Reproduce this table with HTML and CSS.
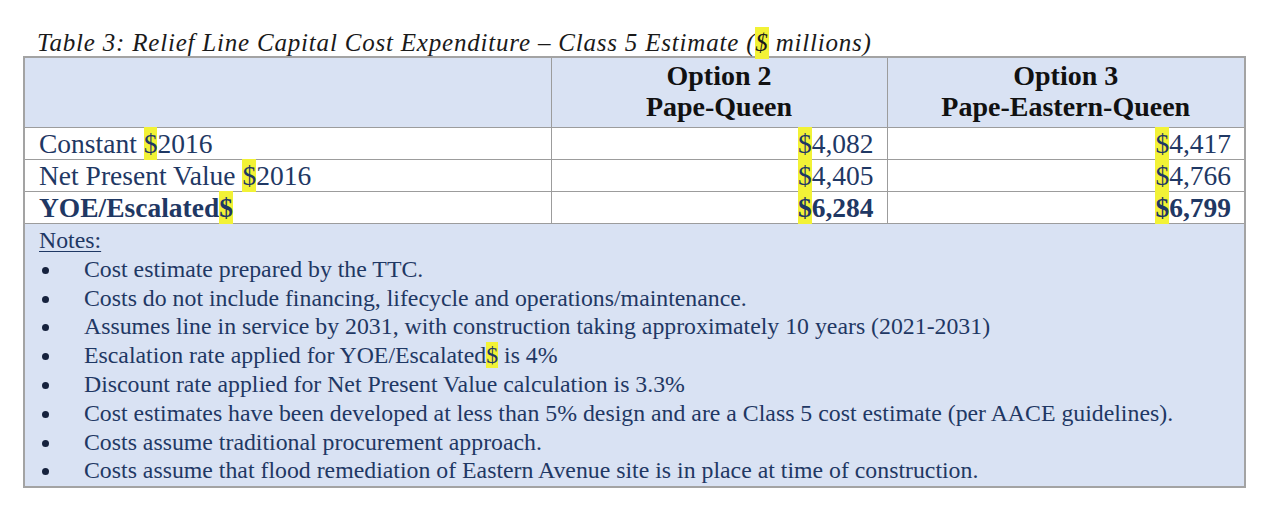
FILE: index.html
```html
<!DOCTYPE html>
<html>
<head>
<meta charset="utf-8">
<link rel="stylesheet" href="styles.css">
</head>
<body>
<div class="page">
  <p class="caption">Table 3: Relief Line Capital Cost Expenditure – Class 5 Estimate (<span class="hl">$</span> millions)</p>
  <table class="cost">
    <colgroup>
      <col class="c1">
      <col class="c2">
      <col class="c3">
    </colgroup>
    <tr class="head">
      <th></th>
      <th>Option 2<br>Pape-Queen</th>
      <th>Option 3<br>Pape-Eastern-Queen</th>
    </tr>
    <tr class="row">
      <td class="label">Constant <span class="hl">$</span>2016</td>
      <td class="num"><span class="hl">$</span>4,082</td>
      <td class="num"><span class="hl">$</span>4,417</td>
    </tr>
    <tr class="row">
      <td class="label">Net Present Value <span class="hl">$</span>2016</td>
      <td class="num"><span class="hl">$</span>4,405</td>
      <td class="num"><span class="hl">$</span>4,766</td>
    </tr>
    <tr class="row bold">
      <td class="label">YOE/Escalated<span class="hl">$</span></td>
      <td class="num"><span class="hl">$</span>6,284</td>
      <td class="num"><span class="hl">$</span>6,799</td>
    </tr>
    <tr class="notes">
      <td colspan="3">
        <div class="notes-title">Notes:</div>
        <ul class="list">
          <li>Cost estimate prepared by the TTC.</li>
          <li>Costs do not include financing, lifecycle and operations/maintenance.</li>
          <li>Assumes line in service by 2031, with construction taking approximately 10 years (2021-2031)</li>
          <li>Escalation rate applied for YOE/Escalated<span class="hl">$</span> is 4%</li>
          <li>Discount rate applied for Net Present Value calculation is 3.3%</li>
          <li>Cost estimates have been developed at less than 5% design and are a Class 5 cost estimate (per AACE guidelines).</li>
          <li>Costs assume traditional procurement approach.</li>
          <li>Costs assume that flood remediation of Eastern Avenue site is in place at time of construction.</li>
        </ul>
      </td>
    </tr>
  </table>
</div>
</body>
</html>
```

FILE: styles.css
```css
html, body {
  margin: 0;
  padding: 0;
  background: #ffffff;
}

.page {
  padding: 29px 0 0 23px;
  font-family: "Liberation Serif", "Times New Roman", serif;
  color: #1f3864;
}

.caption {
  margin: 0 0 0 14px;
  height: 27px;
  line-height: 27px;
  font-size: 25px;
  letter-spacing: 0.8px;
  font-style: italic;
  color: #1a1a1a;
  white-space: nowrap;
}

.caption .hl {
  padding: 2px 0 3px;
}

.hl {
  background: #f2f236;
}

.cost {
  border-collapse: collapse;
  width: 1221px;
  table-layout: fixed;
  border: 2px solid #a3a3a3;
}

.c1 { width: 527px; }
.c2 { width: 336px; }
.c3 { width: 358px; }

.cost th,
.cost td {
  border: 1px solid #9c9c9c;
  padding: 0;
}

.head th {
  background: #d9e2f3;
  height: 66px;
  padding-bottom: 3px;
  font-size: 28px;
  line-height: 31px;
  font-weight: bold;
  color: #111111;
  text-align: center;
  vertical-align: middle;
}

.row td {
  height: 31px;
  font-size: 27.5px;
  line-height: 31px;
  background: #ffffff;
  vertical-align: middle;
  white-space: nowrap;
}

.row .hl {
  padding: 1px 0 1px;
}

.row.bold td {
  font-weight: bold;
}

.label {
  padding-left: 14px !important;
}

.num {
  text-align: right;
  padding-right: 13px !important;
}

.notes td {
  background: #d9e2f3;
  padding: 2px 0 1px 14px;
  font-size: 23.8px;
  line-height: 28.8px;
  vertical-align: top;
}

.notes-title {
  text-decoration: underline;
  text-underline-offset: 3px;
  text-decoration-thickness: 1px;
}

.list {
  list-style: none;
  margin: 0;
  padding: 0;
}

.list li {
  position: relative;
  padding-left: 45px;
  white-space: nowrap;
}

.list li::before {
  content: "";
  position: absolute;
  left: 3px;
  top: 12px;
  width: 7px;
  height: 7px;
  border-radius: 50%;
  background: #16223d;
}
```
